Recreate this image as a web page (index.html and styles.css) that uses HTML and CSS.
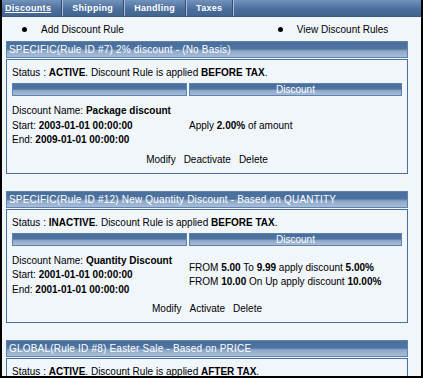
FILE: index.html
```html
<!DOCTYPE html>
<html lang="en">

<head>
    <meta charset="UTF-8">
    <title>Discounts</title>
    <link rel="stylesheet" href="styles.css">
</head>

<body>
    <div class="page">
        <!-- Tabs -->
        <div class="tabs">
            <a class="tab active">Discounts</a>
            <a class="tab">Shipping</a>
            <a class="tab">Handling</a>
            <a class="tab">Taxes</a>
        </div>

        <div class="links">
            <span class="link add">Add Discount Rule</span>
            <span class="link view">View Discount Rules</span>
        </div>

        <!-- Rule #7 -->
        <div class="rule-head">SPECIFIC(Rule ID #7) 2% discount - (No Basis)</div>
        <div class="rule-box">
            <div class="status">Status : <b>ACTIVE</b>. Discount Rule is applied <b>BEFORE TAX</b>.</div>
            <div class="bars">
                <div class="bar"></div>
                <div class="bar">Discount</div>
            </div>
            <div class="details">
                <div class="info">
                    <div>Discount Name: <b>Package discount</b></div>
                    <div>Start: <b>2003-01-01 00:00:00</b></div>
                    <div>End: <b>2009-01-01 00:00:00</b></div>
                </div>
                <div class="amount">
                    <div>Apply <b>2.00%</b> of amount</div>
                </div>
            </div>
            <div class="actions">
                <a>Modify</a>
                <a>Deactivate</a>
                <a>Delete</a>
            </div>
        </div>

        <!-- Rule #12 -->
        <div class="rule-head">SPECIFIC(Rule ID #12) New Quantity Discount - Based on QUANTITY</div>
        <div class="rule-box">
            <div class="status">Status : <b>INACTIVE</b>. Discount Rule is applied <b>BEFORE TAX</b>.</div>
            <div class="bars">
                <div class="bar"></div>
                <div class="bar">Discount</div>
            </div>
            <div class="details">
                <div class="info">
                    <div>Discount Name: <b>Quantity Discount</b></div>
                    <div>Start: <b>2001-01-01 00:00:00</b></div>
                    <div>End: <b>2001-01-01 00:00:00</b></div>
                </div>
                <div class="amount">
                    <div>FROM <b>5.00</b> To <b>9.99</b> apply discount <b>5.00%</b></div>
                    <div>FROM <b>10.00</b> On Up apply discount <b>10.00%</b></div>
                </div>
            </div>
            <div class="actions">
                <a>Modify</a>
                <a>Activate</a>
                <a>Delete</a>
            </div>
        </div>

        <!-- Rule #8 -->
        <div class="rule-head">GLOBAL(Rule ID #8) Easter Sale - Based on PRICE</div>
        <div class="rule-box">
            <div class="status">Status : <b>ACTIVE</b>. Discount Rule is applied <b>AFTER TAX</b>.</div>
        </div>
    </div>
</body>

</html>
```

FILE: styles.css
```css
body {
    margin: 0;
    font-family: "Liberation Sans", Arial, sans-serif;
    font-size: 10px;
    color: #000;
}

.page {
    width: 423px;
    height: 378px;
    box-sizing: border-box;
    border: 2px solid #000;
    border-top: none;
    background-color: #f1f6fb;
    overflow: hidden;
}

.tabs {
    display: flex;
    height: 17px;
    background: linear-gradient(#7393bb, #4a6d9b 60%, #42648f);
    border-bottom: 1px solid #3a5a82;
    box-sizing: border-box;
}

.tab {
    color: #fff;
    font-weight: bold;
    font-size: 9px;
    letter-spacing: 0.3px;
    line-height: 16px;
    padding: 0 10px;
    border-right: 1px solid #2f4f78;
    box-shadow: 1px 0 0 #a9bdd6;
}

.tab:first-child {
    padding-left: 3px;
}

.tab.active {
    text-decoration: underline;
}

.links {
    display: flex;
    height: 24px;
    align-items: center;
    padding-left: 20px;
}

.link {
    display: flex;
    align-items: center;
}

.link::before {
    content: "";
    width: 5px;
    height: 5px;
    border-radius: 50%;
    background-color: #000;
    margin-right: 14px;
}

.link.view {
    margin-left: 154px;
}

.rule-head,
.bar {
    background: linear-gradient(#4a6f9c, #4d73a1 45%, #8ea8c8 60%, #a8bdd7);
    border: 1px solid #5f82ad;
    box-sizing: border-box;
    color: #fff;
}

.rule-head {
    width: 402px;
    height: 17px;
    margin-left: 4px;
    padding-left: 2px;
    line-height: 15px;
    letter-spacing: 0.2px;
    white-space: nowrap;
}

.rule-box {
    width: 402px;
    margin: 1px 0 17px 4px;
    box-sizing: border-box;
    border: 1px solid #4570a1;
    padding: 6px 5px 6px 5px;
}

.status {
    line-height: 14px;
}

.bars {
    display: grid;
    grid-template-columns: 175px 1fr;
    gap: 2px;
    margin-top: 3px;
}

.bar {
    height: 13px;
    line-height: 11px;
    text-align: center;
}

.details {
    display: grid;
    grid-template-columns: 177px 1fr;
    align-items: center;
    margin-top: 8px;
    line-height: 14.5px;
}

.actions {
    display: flex;
    justify-content: center;
    gap: 8px;
    margin-top: 4px;
    line-height: 15px;
}
```
